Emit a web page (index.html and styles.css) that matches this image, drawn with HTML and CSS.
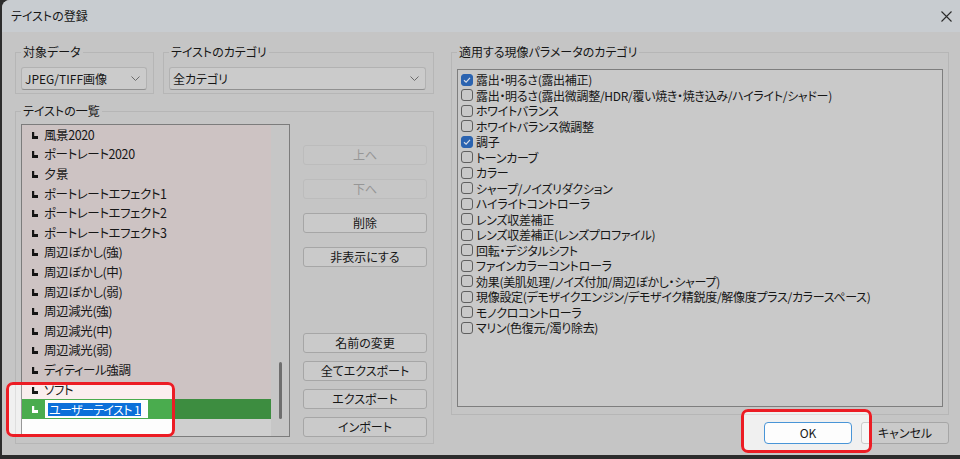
FILE: index.html
```html
<!DOCTYPE html>
<html lang="ja">
<head>
<meta charset="utf-8">
<title>テイストの登録</title>
<link rel="stylesheet" href="styles.css">
</head>
<body>
<div class="window">
  <div class="titlebar">
    <span class="title">テイストの登録</span>
    <svg class="close" width="11" height="11" viewBox="0 0 11 11"><path d="M0.5 0.5L10.5 10.5M10.5 0.5L0.5 10.5" stroke="#2a2a2a" stroke-width="1.1" fill="none"/></svg>
  </div>
  <div class="content">
    <div class="left-col">
      <div class="top-row">
        <fieldset class="group g-target">
          <legend>対象データ</legend>
          <div class="combo"><span>JPEG/TIFF画像</span><svg class="chev" width="9" height="5" viewBox="0 0 9 5"><path d="M0.5 0.5L4.5 4.5L8.5 0.5" stroke="#6a6a6a" fill="none"/></svg></div>
        </fieldset>
        <fieldset class="group g-cat">
          <legend>テイストのカテゴリ</legend>
          <div class="combo"><span>全カテゴリ</span><svg class="chev" width="9" height="5" viewBox="0 0 9 5"><path d="M0.5 0.5L4.5 4.5L8.5 0.5" stroke="#6a6a6a" fill="none"/></svg></div>
        </fieldset>
      </div>
      <fieldset class="group g-list">
        <legend>テイストの一覧</legend>
        <div class="list-row">
          <div class="taste-list">
            <div class="items">
              <div class="item"><svg class="ico" width="6" height="7" viewBox="0 0 6 7"><path d="M0 0h2.2v4h3.8v3H0z"/></svg><span>風景2020</span></div>
              <div class="item"><svg class="ico" width="6" height="7" viewBox="0 0 6 7"><path d="M0 0h2.2v4h3.8v3H0z"/></svg><span>ポートレート2020</span></div>
              <div class="item"><svg class="ico" width="6" height="7" viewBox="0 0 6 7"><path d="M0 0h2.2v4h3.8v3H0z"/></svg><span>夕景</span></div>
              <div class="item"><svg class="ico" width="6" height="7" viewBox="0 0 6 7"><path d="M0 0h2.2v4h3.8v3H0z"/></svg><span>ポートレートエフェクト1</span></div>
              <div class="item"><svg class="ico" width="6" height="7" viewBox="0 0 6 7"><path d="M0 0h2.2v4h3.8v3H0z"/></svg><span>ポートレートエフェクト2</span></div>
              <div class="item"><svg class="ico" width="6" height="7" viewBox="0 0 6 7"><path d="M0 0h2.2v4h3.8v3H0z"/></svg><span>ポートレートエフェクト3</span></div>
              <div class="item"><svg class="ico" width="6" height="7" viewBox="0 0 6 7"><path d="M0 0h2.2v4h3.8v3H0z"/></svg><span>周辺ぼかし(強)</span></div>
              <div class="item"><svg class="ico" width="6" height="7" viewBox="0 0 6 7"><path d="M0 0h2.2v4h3.8v3H0z"/></svg><span>周辺ぼかし(中)</span></div>
              <div class="item"><svg class="ico" width="6" height="7" viewBox="0 0 6 7"><path d="M0 0h2.2v4h3.8v3H0z"/></svg><span>周辺ぼかし(弱)</span></div>
              <div class="item"><svg class="ico" width="6" height="7" viewBox="0 0 6 7"><path d="M0 0h2.2v4h3.8v3H0z"/></svg><span>周辺減光(強)</span></div>
              <div class="item"><svg class="ico" width="6" height="7" viewBox="0 0 6 7"><path d="M0 0h2.2v4h3.8v3H0z"/></svg><span>周辺減光(中)</span></div>
              <div class="item"><svg class="ico" width="6" height="7" viewBox="0 0 6 7"><path d="M0 0h2.2v4h3.8v3H0z"/></svg><span>周辺減光(弱)</span></div>
              <div class="item"><svg class="ico" width="6" height="7" viewBox="0 0 6 7"><path d="M0 0h2.2v4h3.8v3H0z"/></svg><span>ディティール強調</span></div>
              <div class="item"><svg class="ico" width="6" height="7" viewBox="0 0 6 7"><path d="M0 0h2.2v4h3.8v3H0z"/></svg><span>ソフト</span></div>
              <div class="item selected"><svg class="ico" width="6" height="7" viewBox="0 0 6 7"><path d="M0 0h2.2v4h3.8v3H0z"/></svg><span class="edit"><span class="sel">ユーザーテイスト 1</span></span></div>
            </div>
            <div class="scrollbar"><div class="thumb"></div></div>
          </div>
          <div class="side-buttons">
            <div class="btn-group top">
              <button class="btn" disabled>上へ</button>
              <button class="btn" disabled>下へ</button>
              <button class="btn">削除</button>
              <button class="btn">非表示にする</button>
            </div>
            <div class="btn-group bottom">
              <button class="btn">名前の変更</button>
              <button class="btn">全てエクスポート</button>
              <button class="btn">エクスポート</button>
              <button class="btn">インポート</button>
            </div>
          </div>
        </div>
      </fieldset>
    </div>
    <div class="right-col">
      <fieldset class="group g-params">
        <legend>適用する現像パラメータのカテゴリ</legend>
        <div class="param-list">
          <div class="param"><span class="cb checked"><svg width="10" height="10" viewBox="0 0 10 10"><path d="M2 5.2L4.1 7.2L8 2.8" stroke="#d6dce6" stroke-width="1.2" fill="none"/></svg></span>露出・明るさ(露出補正)</div>
          <div class="param"><span class="cb"></span>露出・明るさ(露出微調整/HDR/覆い焼き・焼き込み/ハイライト/シャドー)</div>
          <div class="param"><span class="cb"></span>ホワイトバランス</div>
          <div class="param"><span class="cb"></span>ホワイトバランス微調整</div>
          <div class="param"><span class="cb checked"><svg width="10" height="10" viewBox="0 0 10 10"><path d="M2 5.2L4.1 7.2L8 2.8" stroke="#d6dce6" stroke-width="1.2" fill="none"/></svg></span>調子</div>
          <div class="param"><span class="cb"></span>トーンカーブ</div>
          <div class="param"><span class="cb"></span>カラー</div>
          <div class="param"><span class="cb"></span>シャープ/ノイズリダクション</div>
          <div class="param"><span class="cb"></span>ハイライトコントローラ</div>
          <div class="param"><span class="cb"></span>レンズ収差補正</div>
          <div class="param"><span class="cb"></span>レンズ収差補正(レンズプロファイル)</div>
          <div class="param"><span class="cb"></span>回転・デジタルシフト</div>
          <div class="param"><span class="cb"></span>ファインカラーコントローラ</div>
          <div class="param"><span class="cb"></span>効果(美肌処理/ノイズ付加/周辺ぼかし・シャープ)</div>
          <div class="param"><span class="cb"></span>現像設定(デモザイクエンジン/デモザイク精鋭度/解像度プラス/カラースペース)</div>
          <div class="param"><span class="cb"></span>モノクロコントローラ</div>
          <div class="param"><span class="cb"></span>マリン(色復元/濁り除去)</div>
        </div>
      </fieldset>
      <div class="dialog-buttons">
        <button class="btn dlg ok">OK</button>
        <button class="btn dlg">キャンセル</button>
      </div>
    </div>
  </div>
  <div class="highlight hl-list"></div>
  <div class="highlight hl-ok"></div>
</div>
</body>
</html>
```
FILE: styles.css
```css
* { box-sizing: border-box; }
html, body { margin: 0; height: 100%; }
body {
  background: #2c2c2c;
  font-family: "Noto Sans CJK JP", "Noto Sans", sans-serif;
  font-size: 12px;
  color: #161616;
  font-feature-settings: "palt";
  overflow: hidden;
}
.window {
  position: relative;
  margin-left: 2px;
  width: 958px;
  height: 455px;
  background: #c5c5c5;
  border-top-left-radius: 8px;
  overflow: hidden;
}
.titlebar {
  height: 32px;
  background: #c8ccd0;
  display: flex;
  align-items: center;
  justify-content: space-between;
  padding: 0 8px 0 9px;
  line-height: 16px;
}
.close { display: block; }
.content {
  display: flex;
  gap: 17px;
  padding: 12px 0 0 13px;
}
.left-col { width: 419px; }
.right-col { width: 498px; }
.top-row { display: flex; gap: 9px; }
.group {
  margin: 0;
  min-width: 0;
  border: 1px solid #b6b6b6;
}
.group legend {
  padding: 0 2px;
  line-height: 16px;
  font-size: 12px;
}
.g-target { width: 139px; padding: 7px 6px 3px 5px; }
.g-cat { width: 271px; padding: 7px 7px 3px 5px; }
.g-list { margin-top: 9px; padding: 5px 6px 6px 5px; }
.g-params { padding: 9px 5px 7px 5px; }
.combo {
  height: 23px;
  border: 1px solid #b2b2b2;
  border-bottom-color: #909090;
  border-radius: 3px;
  background: #cbcbcb;
  display: flex;
  align-items: center;
  justify-content: space-between;
  padding: 0 6px 0 3px;
  line-height: 16px;
}
.chev { display: block; }
.list-row { display: flex; gap: 13px; }
.taste-list {
  width: 269px;
  height: 313px;
  border: 1px solid #7c7c7c;
  display: flex;
}
.items {
  flex: 1;
  background: #cfcfcf;
  overflow: hidden;
}
.item {
  height: 19.6px;
  display: flex;
  align-items: center;
  padding-left: 10px;
  gap: 6px;
  background: #cdc3c3;
  line-height: 16px;
  font-size: 12.5px;
  letter-spacing: -0.4px;
  white-space: nowrap;
}
.ico { display: block; fill: #141414; margin-top: 1px; }
.item.selected { background: #3d8d40; gap: 7px; }
.item.selected .ico { fill: #d6e6d6; }
.edit {
  display: flex;
  align-items: center;
  width: 103px;
  height: 18px;
  background: #cfcfcf;
  border: 1px solid #d4d4d4;
  padding-left: 2px;
  overflow: hidden;
}
.sel {
  background: #0a5cb2;
  color: #d2d2d2;
  height: 13px;
  line-height: 13px;
  padding: 0 1px;
  font-size: 12px;
  letter-spacing: -0.6px;
  white-space: nowrap;
}
.scrollbar {
  width: 18px;
  background: #c6c6c6;
}
.thumb {
  margin: 237px 0 0 8px;
  width: 3px;
  height: 57px;
  border-radius: 2px;
  background: #6e6e6e;
}
.side-buttons {
  width: 124px;
  height: 313px;
  display: flex;
  flex-direction: column;
  justify-content: space-between;
}
.btn-group { display: flex; flex-direction: column; }
.btn-group.top { padding-top: 21px; gap: 14px; }
.btn-group.bottom { gap: 8px; }
.btn {
  height: 20px;
  padding: 0;
  font-family: inherit;
  font-size: 12px;
  font-feature-settings: "palt";
  color: #161616;
  background: #cacaca;
  border: 1px solid #a6a6a6;
  border-radius: 3px;
  line-height: 16px;
}
.btn:disabled {
  color: #969696;
  background: #c6c6c6;
  border-color: #bcbcbc;
}
.param-list {
  height: 338px;
  border: 1px solid #7e7e7e;
  background: #c9c9c9;
  padding: 2px 3px;
}
.param {
  height: 15.5px;
  display: flex;
  align-items: center;
  gap: 3px;
  line-height: 15px;
  white-space: nowrap;
  letter-spacing: -0.3px;
}
.cb {
  width: 12px;
  height: 12px;
  border: 1px solid #5f5f5f;
  border-radius: 3px;
  background: #c8c8c8;
  display: flex;
  align-items: center;
  justify-content: center;
  flex: none;
}
.cb.checked { background: #2b63b0; border-color: #2b63b0; }
.cb svg { display: block; }
.dialog-buttons {
  display: flex;
  justify-content: flex-end;
  gap: 9px;
  margin-top: 7px;
}
.btn.dlg { width: 88px; height: 22px; }
.btn.ok {
  background: #cfcfcf;
  border-color: #3c7ab0;
  border-radius: 4px;
}
.highlight {
  position: absolute;
  border: 3px solid #ec1c24;
  border-radius: 7px;
  backdrop-filter: brightness(1.22);
}
.hl-list { left: 4px; top: 382px; width: 169px; height: 55px; }
.hl-ok { left: 739px; top: 409px; width: 131px; height: 44px; }
```
